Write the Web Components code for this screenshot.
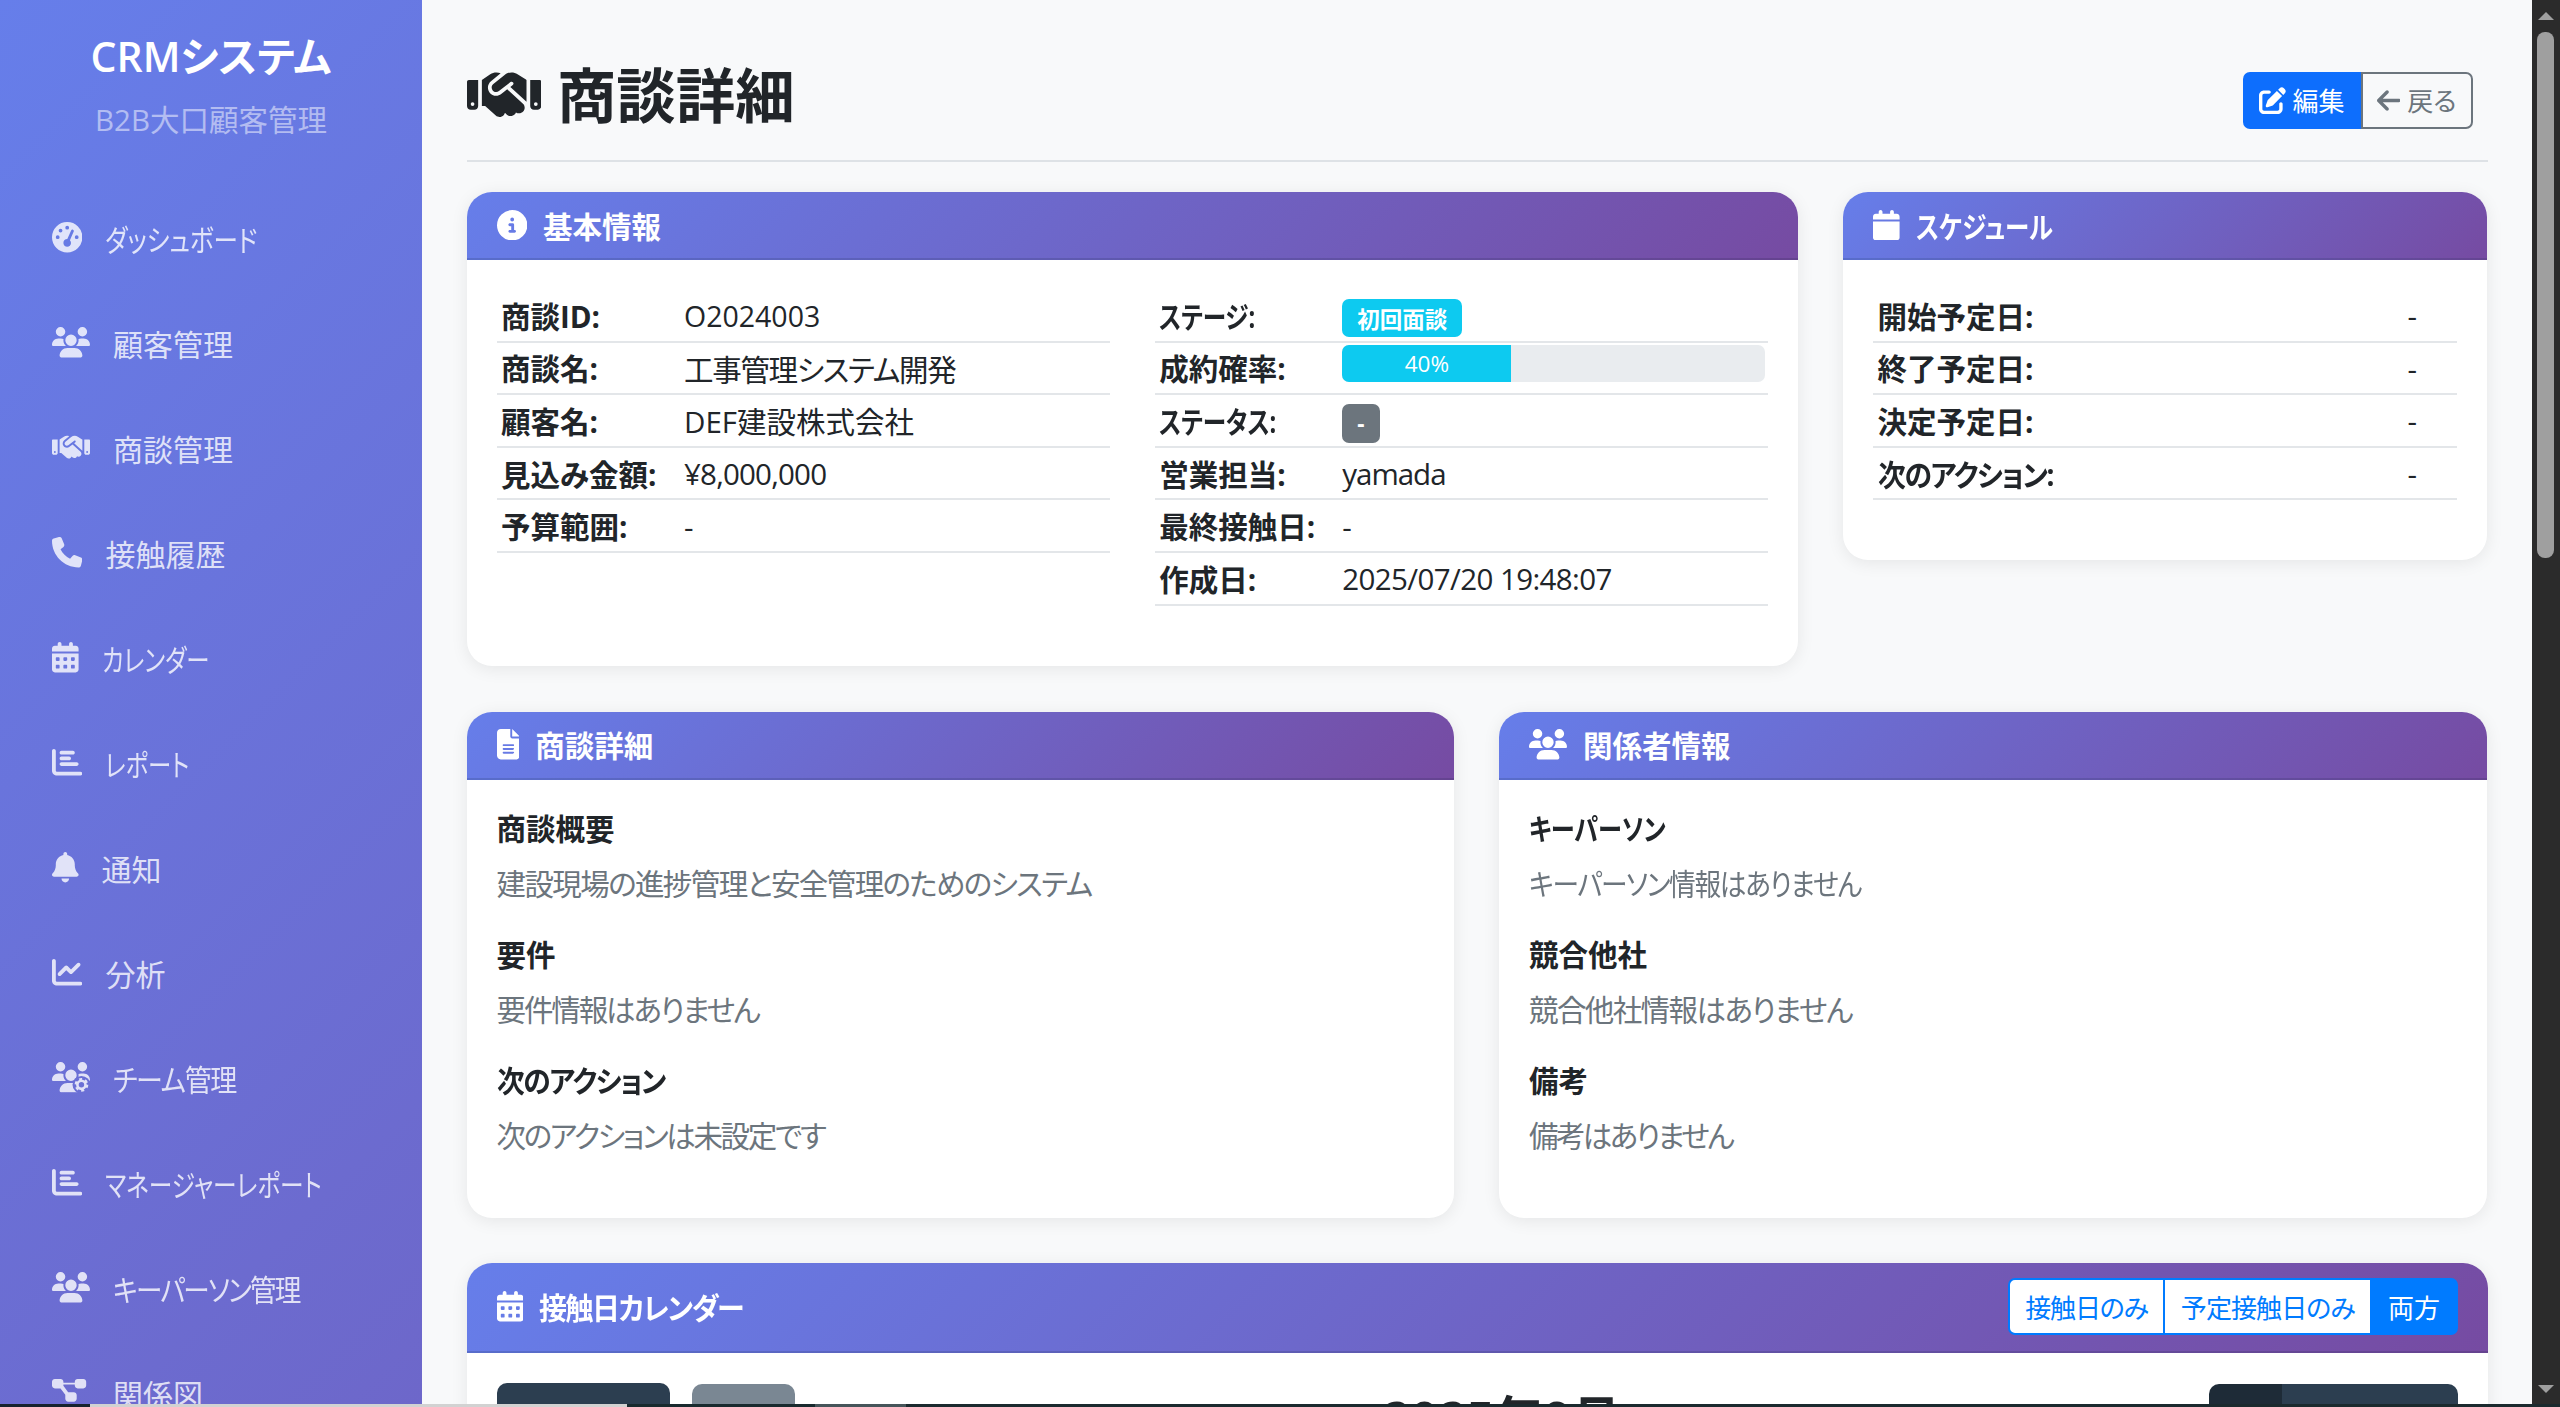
<!DOCTYPE html>
<html lang="ja">
<head>
<meta charset="utf-8">
<title>商談詳細</title>
<style>
html,body{margin:0;padding:0;height:1407px;overflow:hidden;background:#f8f9fa}
body{font-family:"Open Sans","Noto Sans CJK JP",sans-serif;font-size:29.5px;color:#212529;font-feature-settings:"palt"}
</style>
</head>
<body>
<crm-app>
  <crm-sidebar slot="sidebar" brand="CRMシステム" tagline="B2B大口顧客管理">
    <nav-item icon="gauge" label="ダッシュボード" sx=".817"></nav-item>
    <nav-item icon="users" label="顧客管理"></nav-item>
    <nav-item icon="handshake" label="商談管理"></nav-item>
    <nav-item icon="phone" label="接触履歴"></nav-item>
    <nav-item icon="caldays" label="カレンダー" sx=".78"></nav-item>
    <nav-item icon="chartbar" label="レポート" sx=".78"></nav-item>
    <nav-item icon="bell" label="通知"></nav-item>
    <nav-item icon="chartline" label="分析"></nav-item>
    <nav-item icon="usersgear" label="チーム管理" ls="-1.5" sx=".9"></nav-item>
    <nav-item icon="chartbar" label="マネージャーレポート" sx=".79"></nav-item>
    <nav-item icon="users" label="キーパーソン管理" ls="-2" sx=".886"></nav-item>
    <nav-item icon="diagram" label="関係図"></nav-item>
  </crm-sidebar>
  <page-head heading="商談詳細" icon="handshake">
    <btn-group>
      <crm-btn kind="primary" icon="pen">編集</crm-btn>
      <crm-btn kind="outline" icon="arrow">戻る</crm-btn>
    </btn-group>
  </page-head>
  <crm-row cols="2fr 1fr" gap="46">
    <crm-card heading="基本情報" icon="info">
      <two-col>
        <info-table>
          <info-row label="商談ID:"><span class="lat">O2024003</span></info-row>
          <info-row label="商談名:" vls="-1.3">工事管理システム開発</info-row>
          <info-row label="顧客名:">DEF建設株式会社</info-row>
          <info-row label="見込み金額:" vls="-.8">¥8,000,000</info-row>
          <info-row label="予算範囲:">-</info-row>
        </info-table>
        <info-table>
          <info-row label="ステージ:" sx=".8"><crm-badge tone="info">初回面談</crm-badge></info-row>
          <info-row label="成約確率:" top><crm-progress value="40"></crm-progress></info-row>
          <info-row label="ステータス:" sx=".8"><crm-badge tone="muted">-</crm-badge></info-row>
          <info-row label="営業担当:" vls="-1">yamada</info-row>
          <info-row label="最終接触日:">-</info-row>
          <info-row label="作成日:" vls="-.6">2025/07/20 19:48:07</info-row>
        </info-table>
      </two-col>
    </crm-card>
    <crm-card heading="スケジュール" icon="calendar" sx=".83">
      <info-table labelw="530px">
        <info-row label="開始予定日:">-</info-row>
        <info-row label="終了予定日:">-</info-row>
        <info-row label="決定予定日:">-</info-row>
        <info-row label="次のアクション:" ls="-1.5" sx=".943">-</info-row>
      </info-table>
    </crm-card>
  </crm-row>
  <crm-row cols="1fr 1fr" gap="45">
    <crm-card heading="商談詳細" icon="file">
      <note-block heading="商談概要" pls="-1.6">建設現場の進捗管理と安全管理のためのシステム</note-block>
      <note-block heading="要件" pls="-2.1">要件情報はありません</note-block>
      <note-block heading="次のアクション" hls="-1.5" hsx=".94" pls="-2.3">次のアクションは未設定です</note-block>
    </crm-card>
    <crm-card heading="関係者情報" icon="users">
      <note-block heading="キーパーソン" hsx=".82" pls="-1.5" psx=".905">キーパーソン情報はありません</note-block>
      <note-block heading="競合他社" pls="-1.6">競合他社情報はありません</note-block>
      <note-block heading="備考" pls="-2.6">備考はありません</note-block>
    </crm-card>
  </crm-row>
  <crm-card heading="接触日カレンダー" icon="caldays" tall ls="-1.5" sx=".948">
    <toggle-group slot="actions">
      <toggle-btn ls="-1.2">接触日のみ</toggle-btn>
      <toggle-btn ls="-.9">予定接触日のみ</toggle-btn>
      <toggle-btn active>両方</toggle-btn>
    </toggle-group>
    <cal-toolbar title="2025年9月"></cal-toolbar>
  </crm-card>
</crm-app>
<win-scrollbar></win-scrollbar>
<task-edge></task-edge>
<script>
const P={
gauge:[512,'M0 256a256 256 0 1 1 512 0A256 256 0 1 1 0 256zM288 96a32 32 0 1 0 -64 0 32 32 0 1 0 64 0zM256 416c35.3 0 64-28.7 64-64c0-17.4-6.9-33.1-18.1-44.6L366 161.7c5.3-12.1-.2-26.3-12.3-31.6s-26.3 .2-31.6 12.3L257.9 288c-.6 0-1.3 0-1.9 0c-35.3 0-64 28.7-64 64s28.7 64 64 64zM176 144a32 32 0 1 0 -64 0 32 32 0 1 0 64 0zM96 288a32 32 0 1 0 0-64 32 32 0 1 0 0 64zm352-32a32 32 0 1 0 -64 0 32 32 0 1 0 64 0z'],
users:[640,'M144 0a80 80 0 1 1 0 160A80 80 0 1 1 144 0zM512 0a80 80 0 1 1 0 160A80 80 0 1 1 512 0zM0 298.7C0 239.8 47.8 192 106.7 192h42.7c15.9 0 31 3.5 44.6 9.7c-1.3 7.2-1.9 14.7-1.9 22.3c0 38.2 16.8 72.5 43.3 96c-.2 0-.4 0-.7 0H21.3C9.6 320 0 310.4 0 298.7zM405.3 320c-.2 0-.4 0-.7 0c26.6-23.5 43.3-57.8 43.3-96c0-7.6-.7-15-1.9-22.3c13.6-6.3 28.7-9.7 44.6-9.7h42.7C592.2 192 640 239.8 640 298.7c0 11.8-9.6 21.3-21.3 21.3H405.3zM224 224a96 96 0 1 1 192 0 96 96 0 1 1 -192 0zM128 485.3C128 411.7 187.7 352 261.3 352H378.7C452.3 352 512 411.7 512 485.3c0 14.7-11.9 26.7-26.7 26.7H154.7c-14.7 0-26.7-11.9-26.7-26.7z'],
handshake:[640,'M323.4 85.2l-96.8 78.4c-16.1 13-19.2 36.4-7 53.1c12.9 17.8 38 21.3 55.3 7.8l99.3-77.2c7-5.4 17-4.2 22.5 2.8s4.2 17-2.8 22.5l-20.9 16.2L512 316.8V128h-.7l-3.9-2.5L434.8 79c-15.3-9.8-33.2-15-51.4-15c-21.8 0-43 7.5-60 21.2zm22.8 124.4l-51.7 40.2C263 274.4 217.3 268 193.7 235.6c-22.2-30.5-16.6-73.1 12.7-96.8l83.2-67.3c-11.6-4.9-24.1-7.4-36.8-7.4C234 64 215.7 69.6 200 80l-72 48V352h28.2l91.4 83.4c19.6 17.9 49.9 16.5 67.8-3.1c5.5-6.1 9.2-13.2 11.1-20.6l17 15.6c19.5 17.9 49.9 16.6 67.8-2.9c4.5-4.9 7.8-10.6 9.9-16.5c19.4 13 45.8 10.3 62.1-6.8c18-18.8 17.3-48.6-1.5-66.6L346.2 209.6zM16 128c-8.8 0-16 7.2-16 16V352c0 17.7 14.3 32 32 32H64c17.7 0 32-14.3 32-32V128H16zM48 320a16 16 0 1 1 0 32 16 16 0 1 1 0-32zM544 128V352c0 17.7 14.3 32 32 32h32c17.7 0 32-14.3 32-32V144c0-8.8-7.2-16-16-16H544zm32 208a16 16 0 1 1 32 0 16 16 0 1 1-32 0z'],
phone:[512,'M164.9 24.6c-7.7-18.6-28-28.5-47.4-23.2l-88 24C12.1 30.2 0 46 0 64C0 311.4 200.6 512 448 512c18 0 33.8-12.1 38.6-29.5l24-88c5.3-19.4-4.6-39.7-23.2-47.4l-96-40c-16.3-6.8-35.2-2.1-46.3 11.6L304.7 368C234.3 334.7 177.3 277.7 144 207.3L193.3 167c13.7-11.2 18.4-30 11.6-46.3l-40-96z'],
caldays:[448,'M128 0c17.7 0 32 14.3 32 32V64H288V32c0-17.7 14.3-32 32-32s32 14.3 32 32V64h48c26.5 0 48 21.5 48 48v48H0V112C0 85.5 21.5 64 48 64H96V32c0-17.7 14.3-32 32-32zM0 192H448V464c0 26.5-21.5 48-48 48H48c-26.5 0-48-21.5-48-48V192zm64 80v32c0 8.8 7.2 16 16 16h32c8.8 0 16-7.2 16-16V272c0-8.8-7.2-16-16-16H80c-8.8 0-16 7.2-16 16zm128 0v32c0 8.8 7.2 16 16 16h32c8.8 0 16-7.2 16-16V272c0-8.8-7.2-16-16-16H208c-8.8 0-16 7.2-16 16zm144-16c-8.8 0-16 7.2-16 16v32c0 8.8 7.2 16 16 16h32c8.8 0 16-7.2 16-16V272c0-8.8-7.2-16-16-16H336zM64 400v32c0 8.8 7.2 16 16 16h32c8.8 0 16-7.2 16-16V400c0-8.8-7.2-16-16-16H80c-8.8 0-16 7.2-16 16zm144-16c-8.8 0-16 7.2-16 16v32c0 8.8 7.2 16 16 16h32c8.8 0 16-7.2 16-16V400c0-8.8-7.2-16-16-16H208zm112 16v32c0 8.8 7.2 16 16 16h32c8.8 0 16-7.2 16-16V400c0-8.8-7.2-16-16-16H336c-8.8 0-16 7.2-16 16z'],
calendar:[448,'M96 32V64H48C21.5 64 0 85.5 0 112v48H448V112c0-26.5-21.5-48-48-48H352V32c0-17.7-14.3-32-32-32s-32 14.3-32 32V64H160V32c0-17.7-14.3-32-32-32S96 14.3 96 32zM448 192H0V464c0 26.5 21.5 48 48 48H400c26.5 0 48-21.5 48-48V192z'],
chartbar:[512,'M32 32c17.7 0 32 14.3 32 32V400c0 8.8 7.2 16 16 16H480c17.7 0 32 14.3 32 32s-14.3 32-32 32H80c-44.2 0-80-35.8-80-80V64C0 46.3 14.3 32 32 32zm96 64c0-17.7 14.3-32 32-32l192 0c17.7 0 32 14.3 32 32s-14.3 32-32 32l-192 0c-17.7 0-32-14.3-32-32zm32 64l128 0c17.7 0 32 14.3 32 32s-14.3 32-32 32l-128 0c-17.7 0-32-14.3-32-32s14.3-32 32-32zm0 96H416c17.7 0 32 14.3 32 32s-14.3 32-32 32H160c-17.7 0-32-14.3-32-32s14.3-32 32-32z'],
bell:[448,'M224 0c-17.7 0-32 14.3-32 32V51.2C119 66 64 130.6 64 208v18.8c0 47-17.3 92.4-48.5 127.6l-7.4 8.3c-8.4 9.4-10.4 22.9-5.3 34.4S19.4 416 32 416H416c12.6 0 24-7.4 29.2-18.9s3.1-25-5.3-34.4l-7.4-8.3C401.3 319.2 384 273.9 384 226.8V208c0-77.4-55-142-128-156.8V32c0-17.7-14.3-32-32-32zm45.3 493.3c12-12 18.7-28.3 18.7-45.3H224 160c0 17 6.7 33.3 18.7 45.3s28.3 18.7 45.3 18.7s33.3-6.7 45.3-18.7z'],
chartline:[512,'M64 64c0-17.7-14.3-32-32-32S0 46.3 0 64V400c0 44.2 35.8 80 80 80H480c17.7 0 32-14.3 32-32s-14.3-32-32-32H80c-8.8 0-16-7.2-16-16V64zm406.6 86.6c12.5-12.5 12.5-32.8 0-45.3s-32.8-12.5-45.3 0L320 210.7l-57.4-57.4c-12.5-12.5-32.8-12.5-45.3 0l-112 112c-12.5 12.5-12.5 32.8 0 45.3s32.8 12.5 45.3 0L240 221.3l57.4 57.4c12.5 12.5 32.8 12.5 45.3 0l128-128z'],
diagram:[640,'M0 80C0 53.5 21.5 32 48 32h96c26.5 0 48 21.5 48 48V96H384V80c0-26.5 21.5-48 48-48h96c26.5 0 48 21.5 48 48v64c0 26.5-21.5 48-48 48H432c-26.5 0-48-21.5-48-48V128H192v16c0 1.7-.1 3.4-.3 5L272 256h96c26.5 0 48 21.5 48 48v64c0 26.5-21.5 48-48 48H272c-26.5 0-48-21.5-48-48V304c0-1.7 .1-3.4 .3-5L144 192H48c-26.5 0-48-21.5-48-48V80z'],
info:[512,'M256 512A256 256 0 1 0 256 0a256 256 0 1 0 0 512zM216 336h24V272H216c-13.3 0-24-10.7-24-24s10.7-24 24-24h48c13.3 0 24 10.7 24 24v88h8c13.3 0 24 10.7 24 24s-10.7 24-24 24H216c-13.3 0-24-10.7-24-24s10.7-24 24-24zm40-208a32 32 0 1 1 0 64 32 32 0 1 1 0-64z'],
file:[384,'M64 0C28.7 0 0 28.7 0 64V448c0 35.3 28.7 64 64 64H320c35.3 0 64-28.7 64-64V160H256c-17.7 0-32-14.3-32-32V0H64zM256 0V128H384L256 0zM112 256H272c8.8 0 16 7.2 16 16s-7.2 16-16 16H112c-8.8 0-16-7.2-16-16s7.2-16 16-16zm0 64H272c8.8 0 16 7.2 16 16s-7.2 16-16 16H112c-8.8 0-16-7.2-16-16s7.2-16 16-16zm0 64H272c8.8 0 16 7.2 16 16s-7.2 16-16 16H112c-8.8 0-16-7.2-16-16s7.2-16 16-16z'],
pen:[512,'M471.6 21.7c-21.9-21.9-57.3-21.9-79.2 0L362.3 51.7l97.9 97.9 30.1-30.1c21.9-21.9 21.9-57.3 0-79.2L471.6 21.7zm-299.2 220c-6.1 6.1-10.8 13.6-13.5 21.9l-29.6 88.8c-2.9 8.6-.6 18.1 5.8 24.6s15.9 8.7 24.6 5.8l88.8-29.6c8.2-2.7 15.7-7.4 21.9-13.5L437.7 172.3 339.7 74.3 172.4 241.7zM96 64C43 64 0 107 0 160V416c0 53 43 96 96 96H352c53 0 96-43 96-96V320c0-17.7-14.3-32-32-32s-32 14.3-32 32v96c0 17.7-14.3 32-32 32H96c-17.7 0-32-14.3-32-32V160c0-17.7 14.3-32 32-32h96c17.7 0 32-14.3 32-32s-14.3-32-32-32H96z'],
arrow:[448,'M9.4 233.4c-12.5 12.5-12.5 32.8 0 45.3l160 160c12.5 12.5 32.8 12.5 45.3 0s12.5-32.8 0-45.3L109.2 288 416 288c17.7 0 32-14.3 32-32s-14.3-32-32-32l-306.7 0L214.6 118.6c12.5-12.5 12.5-32.8 0-45.3s-32.8-12.5-45.3 0l-160 160z']
};
function iconSvg(name){
  if(name==='usersgear'){
    const u=P.users[1];
    return `<svg viewBox="0 0 640 512" fill="currentColor" aria-hidden="true"><mask id="m"><rect width="640" height="512" fill="#fff"/><circle cx="496" cy="384" r="150" fill="#000"/></mask><path mask="url(#m)" d="${u}"/><circle cx="496" cy="384" r="68" fill="none" stroke="currentColor" stroke-width="44"/><circle cx="496" cy="384" r="100" fill="none" stroke="currentColor" stroke-width="32" stroke-dasharray="52.4 52.3"/></svg>`;
  }
  const [w,d]=P[name];
  return `<svg viewBox="0 0 ${w} 512" fill="currentColor" aria-hidden="true"><path d="${d}"/></svg>`;
}
function define(name,css,render){
  customElements.define(name,class extends HTMLElement{
    connectedCallback(){
      if(this.shadowRoot)return;
      const s=this.attachShadow({mode:'open'});
      s.innerHTML=`<style>${css}</style>`+render(this);
    }
  });
}
const attr=(e,a)=>e.getAttribute(a)||'';
/* The reference's kana are narrower than Noto's: a string can be tightened (ls) and condensed (sx). */
const fit=(e,a,b)=>{
  let s='';
  if(attr(e,a))s+=`letter-spacing:${attr(e,a)}px;`;
  if(attr(e,b))s+=`display:inline-block;white-space:nowrap;transform:scaleX(${attr(e,b)});transform-origin:0 50%;`;
  return s?` style="${s}"`:'';
};

define('fa-i',`:host{display:inline-flex;height:1em;flex:none}svg{height:1em;display:block;width:auto}`,e=>iconSvg(attr(e,'name')));

define('crm-app',`
:host{display:flex;position:relative;width:2532px;height:1407px;overflow:hidden}
main{flex:1;min-width:0;box-sizing:border-box;padding:40px 44.5px 0 44.5px;height:1407px;overflow:hidden}
`,()=>`<slot name="sidebar"></slot><main><slot></slot></main>`);

define('crm-sidebar',`
:host{display:block;flex:none;width:422px;height:1407px;overflow:hidden;color:#fff;
 background:linear-gradient(135deg,#667eea,#764ba2) 0 0/100% 3640px no-repeat}
header{height:185px;box-sizing:border-box;padding-top:30px;text-align:center}
h1{margin:0;font-size:41px;line-height:52px;font-weight:600;color:#fff}
p{margin:18px 0 0;font-size:29.5px;line-height:40px;color:rgba(255,255,255,.5)}
nav{display:flex;flex-direction:column}
`,e=>`<header><h1>${attr(e,'brand')}</h1><p>${attr(e,'tagline')}</p></header><nav><slot></slot></nav>`);

define('nav-item',`
:host{display:flex;align-items:center;height:105px;flex:none;box-sizing:border-box;padding-left:52px;gap:23px;
 font-size:30px;color:rgba(255,255,255,.8)}
fa-i{font-size:30.4px}
`,e=>`<fa-i name="${attr(e,'icon')}"></fa-i><span${fit(e,'ls','sx')}>${attr(e,'label')}</span>`);

define('page-head',`
:host{display:flex;align-items:center;justify-content:space-between;box-sizing:border-box;height:122px;
 border-bottom:2px solid #dee2e6;margin-bottom:30px}
h1{margin:0 0 10px;display:flex;align-items:center;gap:16px;font-size:59.5px;line-height:72px;font-weight:700;color:#212529}
.act{margin-right:15px;display:flex}
`,e=>`<h1><fa-i name="${attr(e,'icon')}"></fa-i><span>${attr(e,'heading')}</span></h1><div class="act"><slot></slot></div>`);

define('btn-group',`:host{display:inline-flex}`,()=>`<slot></slot>`);
define('crm-btn',`
:host{display:inline-flex;align-items:center;gap:7px;height:57px;box-sizing:border-box;font-size:26px}
:host([kind=primary]){background:#0d6efd;color:#fff;border-radius:7px 0 0 7px;padding:0 16px}
:host([kind=outline]){background:transparent;color:#6c757d;border:2px solid #6c757d;border-radius:0 7px 7px 0;padding:0 14px}
fa-i{font-size:27px}
`,e=>`<fa-i name="${attr(e,'icon')}"></fa-i><slot></slot>`);

define('crm-row',`:host{display:grid;gap:45px;align-items:start}`,e=>{
  e.style.gridTemplateColumns=attr(e,'cols')==='2fr 1fr'?'1331.5px 643.5px':'987.5px 987.5px';
  e.style.marginBottom=attr(e,'gap')+'px';
  return `<slot></slot>`;
});

define('crm-card',`
:host{display:block;background:#fff;border-radius:25px;box-shadow:0 3px 17px rgba(0,0,0,.08);overflow:hidden}
header{display:flex;align-items:center;justify-content:space-between;box-sizing:border-box;height:68px;padding:0 30px;
 background:linear-gradient(135deg,#667eea,#764ba2);color:#fff;border-bottom:2px solid rgba(0,0,0,.13)}
:host([tall]) header{height:90px}
.t{display:flex;align-items:center;gap:16px;font-size:29.5px;font-weight:700}
fa-i{font-size:30.4px}
.b{padding:30px}
`,e=>`<header><div class="t"><fa-i name="${attr(e,'icon')}"></fa-i><span${fit(e,'ls','sx')}>${attr(e,'heading')}</span></div><slot name="actions"></slot></header><div class="b"><slot></slot></div>`);

define('two-col',`:host{display:grid;grid-template-columns:1fr 1fr;gap:45px;align-items:start}`,()=>`<slot></slot>`);

define('info-table',`:host{display:block;padding-bottom:30px}`,e=>{
  if(attr(e,'labelw'))e.style.setProperty('--lw',attr(e,'labelw'));
  return `<slot></slot>`;
});
define('info-row',`
:host{display:grid;grid-template-columns:var(--lw,183px) 1fr;align-items:center;box-sizing:border-box;height:52.6px;
 border-bottom:2px solid #e3e6e9;padding:0 4.5px;font-size:29.5px}
:host([top]) .v{align-self:start;padding-top:2px}
.k{font-weight:700;font-size:29.5px}
.v{min-width:0;padding-top:1px}
::slotted(.lat){font-size:28.5px}
`,e=>`<div class="k"><span${fit(e,'ls','sx')}>${attr(e,'label')}</span></div><div class="v"${fit(e,'vls','')}><slot></slot></div>`);

define('crm-badge',`
:host{display:inline-flex;align-items:center;justify-content:center;box-sizing:border-box;height:38.5px;padding:0 15px;border-radius:7px;
 font-size:22.5px;font-weight:700;color:#fff;vertical-align:middle}
:host([tone=info]){background:#0dcaf0}
:host([tone=muted]){background:#6c757d}
`,()=>`<slot></slot>`);

define('crm-progress',`
:host{display:block;height:37px;background:#e9ecef;border-radius:7px;overflow:hidden;width:423px}
div{height:100%;background:#0dcaf0;color:#fff;font-size:22.5px;display:flex;align-items:center;justify-content:center}
`,e=>`<div style="width:${attr(e,'value')}%">${attr(e,'value')}%</div>`);

define('note-block',`
:host{display:block;margin-bottom:30px}
h6{margin:0 0 14px;font-size:29.5px;line-height:38px;font-weight:700;color:#212529}
p{margin:0;font-size:29.5px;line-height:44px;color:#6c757d}
`,e=>`<h6><span${fit(e,'hls','hsx')}>${attr(e,'heading')}</span></h6><p><span${fit(e,'pls','psx')}><slot></slot></span></p>`);

define('toggle-group',`:host{display:inline-flex;height:57px}`,()=>`<slot></slot>`);
define('toggle-btn',`
:host{display:inline-flex;align-items:center;box-sizing:border-box;padding:0 15.5px;font-size:26px;background:#fff;color:#007bff;
 border:2px solid #007bff;margin-left:-2px}
:host(:first-child){border-radius:7px 0 0 7px;margin-left:0}
:host(:last-child){border-radius:0 7px 7px 0}
:host([active]){background:#007bff;color:#fff}
`,e=>{if(attr(e,'ls'))e.style.letterSpacing=attr(e,'ls')+'px';return `<slot></slot>`;});

define('cal-toolbar',`
:host{display:flex;justify-content:space-between;align-items:flex-start;height:60px}
.l{display:flex;gap:22px}
.a{height:80px;width:173px;background:#2c3e50;border-radius:10px}
.c{height:80px;width:103px;margin-top:1px;background:#7a8793;border-radius:10px}
h2{margin:0;font-size:49px;line-height:60px;font-weight:700;color:#212529;padding-top:5px}
.r{display:flex;margin-top:1px;border-radius:10px;overflow:hidden}
.r i{display:block;height:80px;width:73px;background:#1e2b37}
.r b{display:block;height:80px;width:176px;background:#2c3e50}
`,e=>`<div class="l"><div class="a"></div><div class="c"></div></div><h2>${attr(e,'title')}</h2><div class="r"><i></i><b></b></div>`);

define('win-scrollbar',`
:host{position:fixed;top:0;right:0;width:28px;height:1407px;background:#2b2b2b}
.u,.d{position:absolute;left:6px;width:0;height:0;border-left:8.5px solid transparent;border-right:8.5px solid transparent}
.u{top:12px;border-bottom:8px solid #9f9f9f}
.d{top:1385px;border-top:8px solid #9f9f9f}
.t{position:absolute;left:5px;top:32px;width:16.5px;height:526px;border-radius:8px;background:#9f9f9f}
`,()=>`<div class="u"></div><div class="t"></div><div class="d"></div>`);

define('task-edge',`
:host{position:fixed;left:0;right:0;bottom:0;height:3px;
 background:linear-gradient(90deg,#16222e 0 90px,#d2d2d2 90px 627px,#182a2e 627px 815px,#46555a 815px 906px,#1b2a2e 906px)}
`,()=>``);
</script>
</body>
</html>
